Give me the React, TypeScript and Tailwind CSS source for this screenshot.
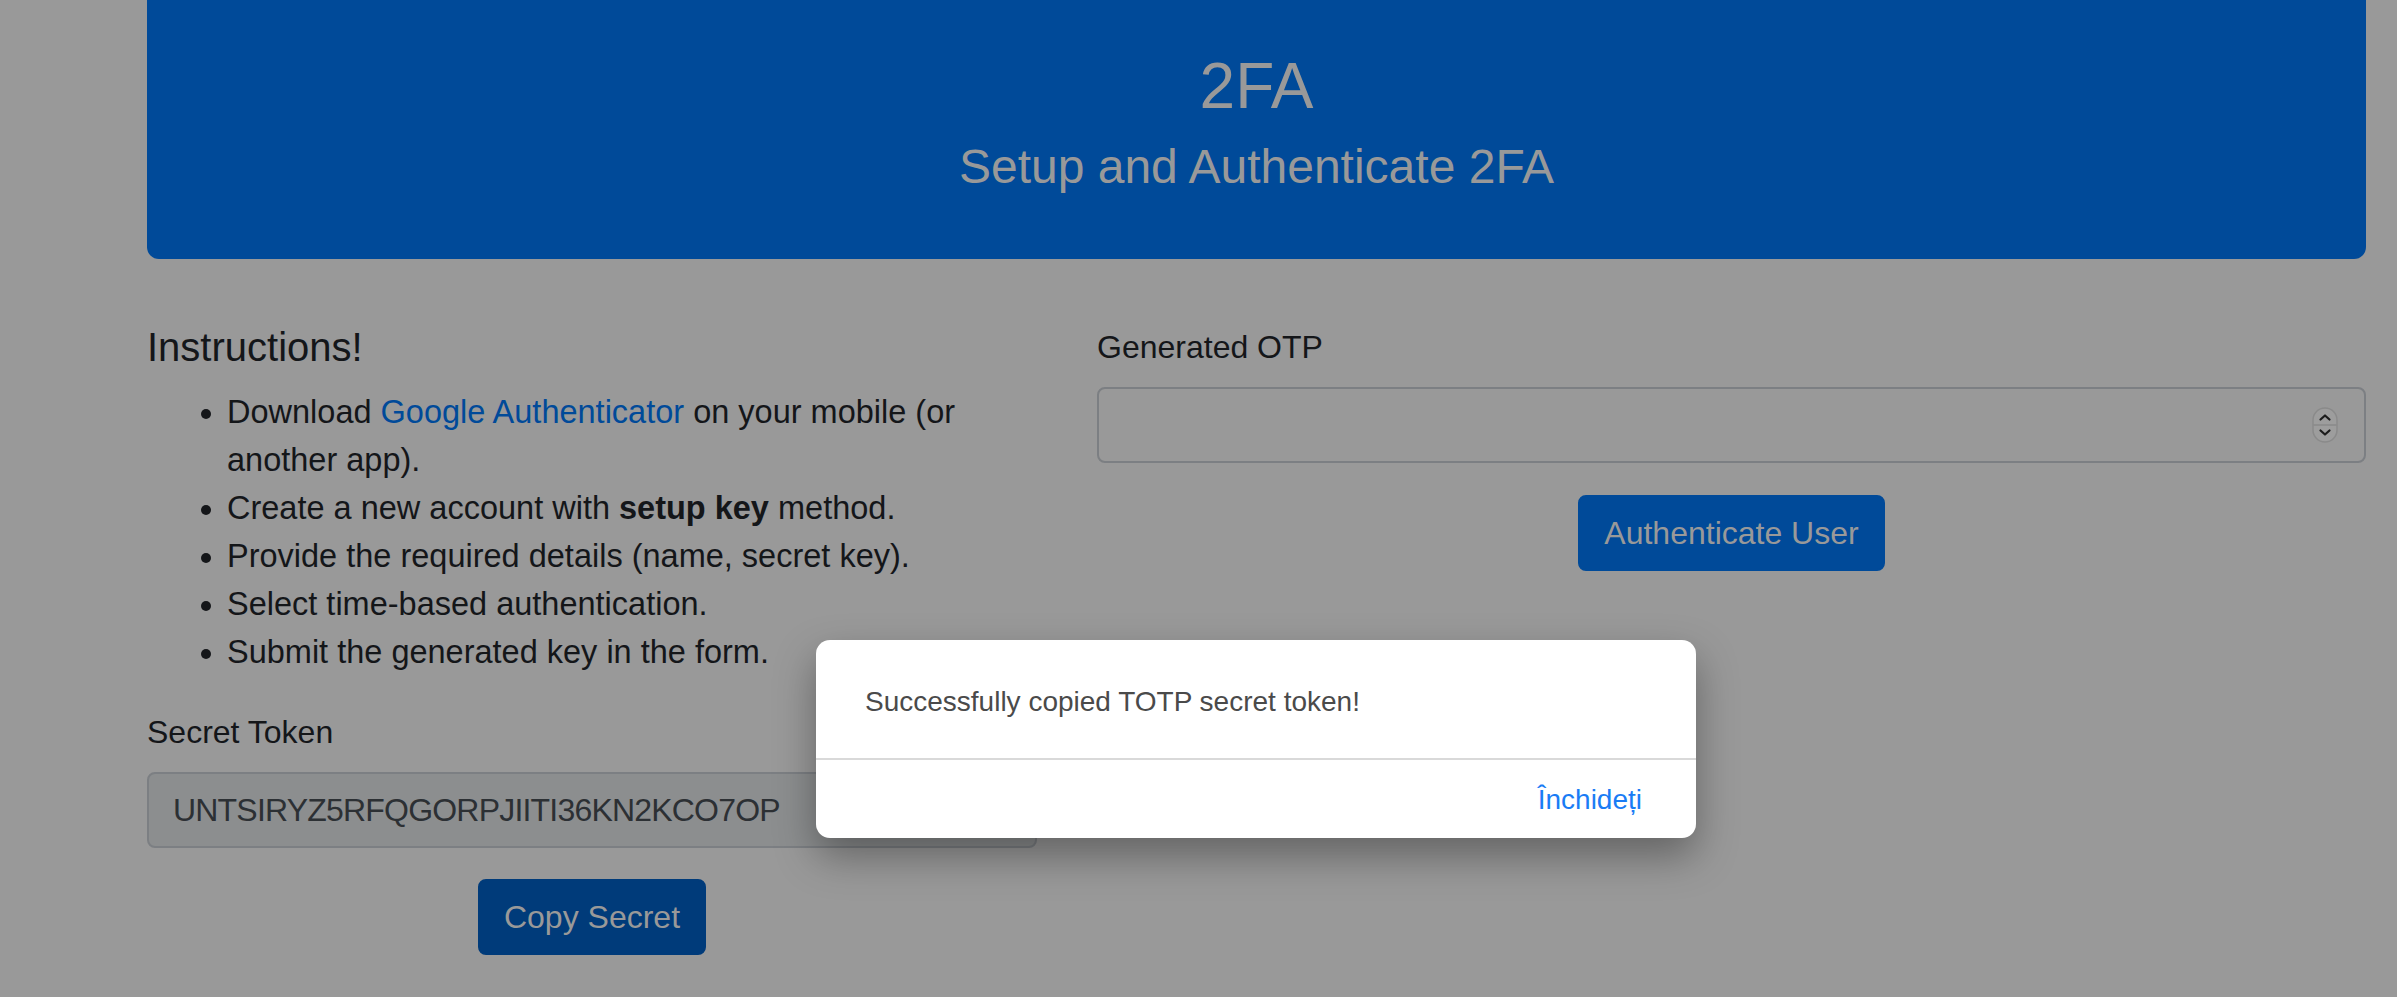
import React from "react";

const steps = [
  <>
    Download <a className="text-[#004a99]">Google Authenticator</a> on your mobile (or another app).
  </>,
  <>
    Create a new account with <b className="font-bold">setup key</b> method.
  </>,
  <>Provide the required details (name, secret key).</>,
  <>Select time-based authentication.</>,
  <>Submit the generated key in the form.</>,
];

const Spinner = () => (
  <svg width="26" height="36" viewBox="0 0 26 36" className="shrink-0">
    <rect x="1" y="1" width="24" height="34" rx="12" fill="#9d9d9d" stroke="#8a8a8a" strokeWidth="1.5" />
    <line x1="1.5" y1="18" x2="24.5" y2="18" stroke="#8a8a8a" strokeWidth="1.5" />
    <path d="M8.5 12.5 L13 8.5 L17.5 12.5" fill="none" stroke="#1c1c1c" strokeWidth="2.2" strokeLinecap="round" strokeLinejoin="round" />
    <path d="M8.5 23.5 L13 27.5 L17.5 23.5" fill="none" stroke="#1c1c1c" strokeWidth="2.2" strokeLinecap="round" strokeLinejoin="round" />
  </svg>
);

export default function App() {
  return (
    <div className="relative min-h-screen w-full overflow-hidden bg-[#999999] font-['Liberation_Sans',Arial,sans-serif] text-[#141619]">
      <div className="pl-[147px] pr-[31px]">
        {/* header */}
        <header className="flex h-[259px] flex-col items-center rounded-b-[12px] bg-[#004a99] pt-[48px] text-[#999999]">
          <h2 className="text-[64px] leading-[77px] font-medium">2FA</h2>
          <h4 className="mt-[13px] text-[48px] leading-[58px] font-medium">Setup and Authenticate 2FA</h4>
        </header>

        <div className="mt-[64px] flex gap-[60px]">
          {/* instructions + secret */}
          <div className="w-[890px] shrink-0">
            <h5 className="text-[40px] leading-[48px] font-medium">Instructions!</h5>
            <ul className="mt-[17px] list-disc pl-[80px] text-[32.5px] leading-[48px]">
              {steps.map((s, i) => (
                <li key={i}>{s}</li>
              ))}
            </ul>
            <label className="mt-[32px] block text-[32px] leading-[48px]">Secret Token</label>
            <input
              readOnly
              value="UNTSIRYZ5RFQGORPJIITI36KN2KCO7OP"
              className="mt-[16px] block h-[76px] w-full rounded-[8px] border-2 border-[#7c7f83] bg-[#8c8e8f] px-[24px] text-[32px] tracking-[-0.8px] text-[#2c3034] outline-none"
            />
            <div className="mt-[31px] flex justify-center">
              <button className="h-[76px] rounded-[8px] border-2 border-[#003b7a] bg-[#003b7a] px-[24px] text-[32px] text-[#999999]">
                Copy Secret
              </button>
            </div>
          </div>

          {/* otp */}
          <div className="flex-1">
            <label className="block text-[32px] leading-[48px]">Generated OTP</label>
            <div className="mt-[16px] flex h-[76px] w-full items-center rounded-[8px] border-2 border-[#7c7f83] pr-[26px] pl-[24px]">
              <input className="h-full flex-1 bg-transparent text-[32px] outline-none" />
              <Spinner />
            </div>
            <div className="mt-[32px] flex justify-center">
              <button className="h-[76px] rounded-[8px] border-2 border-[#004a99] bg-[#004a99] px-[24px] text-[32px] text-[#999999]">
                Authenticate User
              </button>
            </div>
          </div>
        </div>
      </div>

      {/* alert dialog */}
      <div className="absolute top-[640px] left-[816px] flex h-[198px] w-[880px] flex-col overflow-hidden rounded-[14px] bg-white shadow-[0_18px_40px_rgba(0,0,0,0.35)]">
        <div className="h-[118px] px-[49px] pt-[42px] text-[28px] leading-[40px] text-[#4a4a4a]">
          Successfully copied TOTP secret token!
        </div>
        <div className="h-[2px] bg-[#d9d9d9]" />
        <div className="flex flex-1 items-center justify-end pt-[2px] pr-[54px]">
          <button className="text-[28px] leading-[40px] text-[#1a7cf5]">Închideți</button>
        </div>
      </div>
    </div>
  );
}
